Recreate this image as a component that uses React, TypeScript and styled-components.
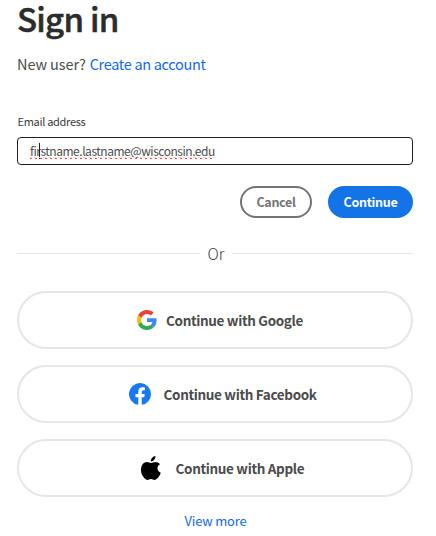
import React from "react";
import styled, { createGlobalStyle } from "styled-components";

const GlobalStyle = createGlobalStyle`
  * { box-sizing: border-box; }
  body {
    margin: 0;
    background: #fff;
    color: #2c2c2c;
    font-family: "Noto Sans CJK SC", "Noto Sans", sans-serif;
  }
`;

const Page = styled.main`
  display: flex;
  flex-direction: column;
  width: 436px;
  height: 536px;
  padding: 0 23px 0 17px;
`;

const Title = styled.h1`
  margin: 0;
  height: 40px;
  font-size: 33px;
  font-weight: 500;
  line-height: 37px;
  letter-spacing: -0.75px;
  -webkit-text-stroke: 0.5px #2c2c2c;
  white-space: nowrap;
`;

const Prompt = styled.p`
  display: flex;
  gap: 4px;
  margin: 13px 0 0;
  font-size: 14.5px;
  line-height: 22px;
  letter-spacing: -0.1px;
  color: #4b4b4b;
  white-space: nowrap;
`;

const Link = styled.a`
  color: #1468e6;
  text-decoration: none;
`;

const PromptLink = styled(Link)`
  letter-spacing: -0.32px;
`;

const Label = styled.label`
  margin-top: 37px;
  height: 25px;
  padding-left: 0.5px;
  font-size: 11px;
  line-height: 18px;
  letter-spacing: -0.3px;
  color: #3a3a3a;
`;

const Field = styled.div`
  display: flex;
  align-items: center;
  height: 28px;
  padding-left: 12px;
  border: 1px solid #1f1f1f;
  border-radius: 4px;
  font-size: 12px;
  line-height: 26px;
  letter-spacing: -0.47px;
  color: #4b4b4b;
`;

const Typed = styled.span`
  position: relative;
  white-space: nowrap;
`;

const Caret = styled.i`
  position: absolute;
  left: 9px;
  top: 5px;
  width: 1px;
  height: 16px;
  background: #222;
`;

const Squiggle = styled.i`
  position: absolute;
  left: 0;
  right: 0;
  top: 19px;
  height: 2px;
  background:
    repeating-linear-gradient(90deg, #fbd8d8 0 1px, transparent 1px 3px, #fbd8d8 3px 5px) 0 0 / 100% 1px no-repeat,
    repeating-linear-gradient(90deg, #f04848 0 2px, transparent 2px 5px) 0 1px / 100% 1px no-repeat;
`;

const Actions = styled.div`
  display: flex;
  justify-content: flex-end;
  gap: 16px;
  margin-top: 21px;
`;

const Button = styled.button<{ $primary?: boolean }>`
  width: ${(p) => (p.$primary ? 85 : 72)}px;
  height: 32px;
  padding: 0;
  border: 2px solid ${(p) => (p.$primary ? "#1473e6" : "#747474")};
  border-radius: 16px;
  background: ${(p) => (p.$primary ? "#1473e6" : "#fff")};
  color: ${(p) => (p.$primary ? "#fff" : "#747474")};
  font: 700 12.5px/28px "Noto Sans CJK SC", sans-serif;
  letter-spacing: -0.3px;
`;

const Divider = styled.div`
  display: flex;
  align-items: center;
  height: 20px;
  margin-top: 26px;
  font-size: 15.5px;
  font-weight: 300;
  color: #3a3a3a;
`;

const Rule = styled.span<{ $width: number }>`
  width: ${(p) => p.$width}px;
  height: 1px;
  margin-bottom: 1px;
  background: #e6e6e6;
`;

const OrText = styled.span`
  flex: 1;
  line-height: 20px;
  margin-bottom: 2px;
  text-align: center;
`;

const Providers = styled.div`
  display: flex;
  flex-direction: column;
  gap: 16px;
  margin-top: 27px;
`;

const Provider = styled.button<{ $start: number; $gap: number }>`
  display: flex;
  align-items: center;
  gap: ${(p) => p.$gap}px;
  height: 58px;
  padding: 0 0 0 ${(p) => p.$start}px;
  border: 2px solid #e6e6e6;
  border-radius: 29px;
  background: #fff;
  color: #4b4b4b;
  font: 700 13.5px/24px "Noto Sans CJK SC", sans-serif;
  letter-spacing: -0.34px;
  white-space: nowrap;
  svg { flex: none; display: block; }
`;

const More = styled.div`
  margin-top: 13px;
  padding-left: 1px;
  font-size: 13px;
  line-height: 22px;
  letter-spacing: -0.2px;
  text-align: center;
`;

const GoogleIcon = () => (
  <svg width="20" height="20" viewBox="0 0 48 48">
    <path fill="#EA4335" d="M24 9.5c3.54 0 6.71 1.22 9.21 3.6l6.85-6.85C35.9 2.38 30.47 0 24 0 14.62 0 6.51 5.38 2.56 13.22l7.98 6.19C12.43 13.72 17.74 9.5 24 9.5z" />
    <path fill="#4285F4" d="M46.98 24.55c0-1.57-.15-3.09-.38-4.55H24v9.02h12.94c-.58 2.96-2.26 5.48-4.78 7.18l7.73 6c4.51-4.18 7.09-10.36 7.09-17.65z" />
    <path fill="#FBBC05" d="M10.53 28.59A14.5 14.5 0 0 1 9.77 24c0-1.6.27-3.14.76-4.59l-7.98-6.19A23.9 23.9 0 0 0 0 24c0 3.88.92 7.54 2.56 10.78l7.97-6.19z" />
    <path fill="#34A853" d="M24 48c6.48 0 11.93-2.13 15.89-5.81l-7.73-6c-2.15 1.45-4.92 2.3-8.16 2.3-6.26 0-11.57-4.22-13.47-9.91l-7.98 6.19C6.51 42.62 14.62 48 24 48z" />
  </svg>
);

const FacebookIcon = () => (
  <svg width="22" height="22" viewBox="0 0 24 24">
    <path fill="#1877F2" d="M24 12a12 12 0 1 0-13.875 11.854v-8.385H7.078V12h3.047V9.356c0-3.007 1.792-4.668 4.533-4.668 1.312 0 2.686.234 2.686.234v2.953H15.83c-1.491 0-1.956.925-1.956 1.875V12h3.328l-.532 3.469h-2.796v8.385A12 12 0 0 0 24 12z" />
  </svg>
);

const AppleIcon = () => (
  <svg width="20" height="24" viewBox="0 0 20 24">
    <path fill="#000" d="M14.4 0c.2 1.4-.4 2.8-1.2 3.8-.8 1-2.1 1.7-3.3 1.6-.2-1.3.4-2.7 1.2-3.6C11.9.9 13.3.1 14.4 0zM19 8.2c-1.7 1-2.5 2.3-2.5 4 0 2 1.3 3.8 3.3 4.5-.4 1.3-1.1 2.6-1.9 3.8-1.2 1.8-2.5 3.4-4.3 3.4-1.5 0-1.9-.9-3.6-.9-1.7 0-2.2.9-3.7.9-1.7 0-3-1.7-4.2-3.4C-.6 16.8-.6 11.5 1.3 8.7c1.1-1.7 2.8-2.7 4.6-2.7 1.7 0 2.8.9 4.2.9 1.4 0 2.3-.9 4.3-.9 1.7 0 3.5.8 4.6 2.2z" />
  </svg>
);

const providers = [
  { name: "Google", Icon: GoogleIcon, start: 118, gap: 9 },
  { name: "Facebook", Icon: FacebookIcon, start: 110, gap: 12.5 },
  { name: "Apple", Icon: AppleIcon, start: 122, gap: 14.5 },
];

export default function App() {
  return (
    <Page>
      <GlobalStyle />
      <Title>Sign in</Title>
      <Prompt>
        <span>New user?</span>
        <PromptLink>Create an account</PromptLink>
      </Prompt>
      <Label>Email address</Label>
      <Field>
        <Typed>
          firstname.lastname@wisconsin.edu
          <Caret />
          <Squiggle />
        </Typed>
      </Field>
      <Actions>
        <Button>Cancel</Button>
        <Button $primary>Continue</Button>
      </Actions>
      <Divider>
        <Rule $width={183} />
        <OrText>Or</OrText>
        <Rule $width={181} />
      </Divider>
      <Providers>
        {providers.map(({ name, Icon, start, gap }) => (
          <Provider key={name} $start={start} $gap={gap}>
            <Icon />
            <span>Continue with {name}</span>
          </Provider>
        ))}
      </Providers>
      <More>
        <Link>View more</Link>
      </More>
    </Page>
  );
}
